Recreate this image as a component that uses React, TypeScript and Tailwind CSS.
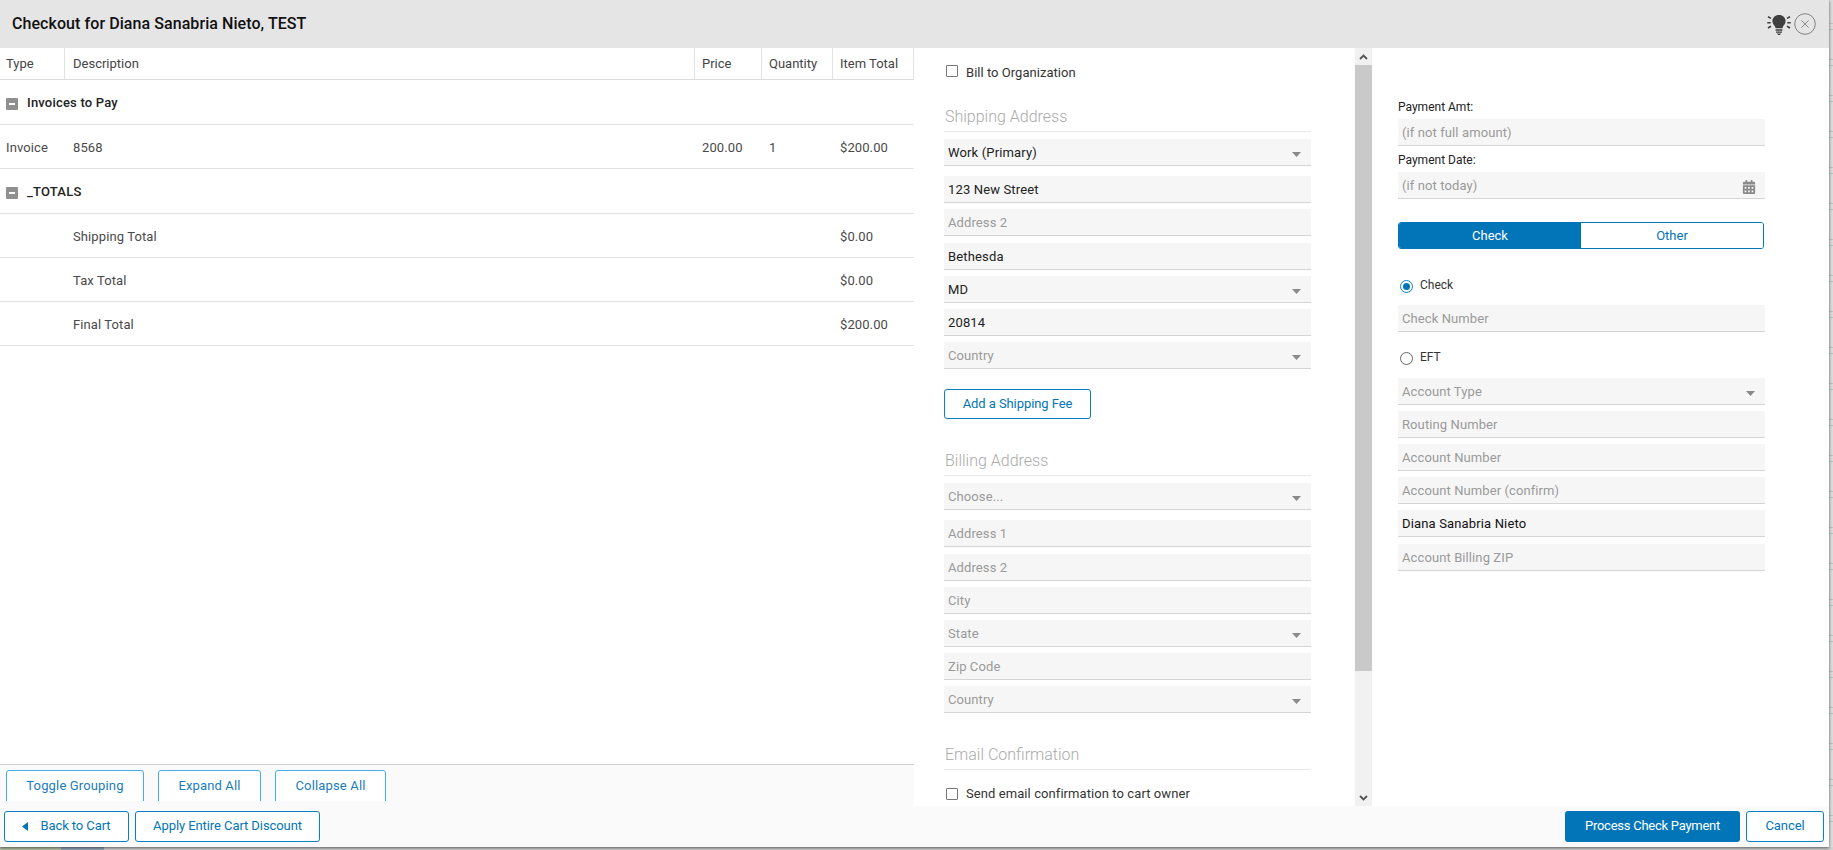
import React from "react";
import { FaCalendarAlt } from "react-icons/fa";

const F = "font-['Roboto',sans-serif]";

function Caret() {
  return (
    <svg width="9" height="5" viewBox="0 0 9 5" className="shrink-0 mt-[2px]">
      <path d="M0 0h9L4.500 5z" fill="#8a8a8a" />
    </svg>
  );
}

function Field({ text, filled, select, calendar, mt, dark }: { text: string; filled?: boolean; select?: boolean; calendar?: boolean; mt: string; dark?: boolean }) {
  return (
    <div className={`${mt} h-[27px] bg-[#f6f6f6] border-b border-[#d5d5d5] flex items-center justify-between pl-1 pr-[10px] pt-[2px] text-[13px] ${filled ? "tracking-[0.15px]" : "tracking-[0.1px]"} ${filled ? (dark ? "text-[#111]" : "text-[#222]") : "text-[#9a9a9a]"}`}>
      <span>{text}</span>
      {select && <Caret />}
      {calendar && <FaCalendarAlt className="text-[#8a8a8a] text-[14px] mr-[-1px] mt-[1px]" />}
    </div>
  );
}

function Heading({ text, mt }: { text: string; mt: string }) {
  return (
    <div className={`${mt} h-[24px] border-b border-[#e8e8e8] text-[16px] leading-[18px] pl-px text-[#aaaaaa] font-light`}>{text}</div>
  );
}

function Check({ label, mt, box, track }: { label: string; mt: string; box: string; track: string }) {
  return (
    <div className={`${mt} flex items-center pl-[2px] h-[14px] text-[13px] text-[#333] ${track}`}>
      <span className={`w-[12px] h-[12px] border border-[#777] rounded-[1px] bg-white mr-2 shrink-0 ${box}`} />
      <span>{label}</span>
    </div>
  );
}

function OutlineBtn({ children, className }: { children: React.ReactNode; className: string }) {
  return (
    <button className={`bg-white border border-[#0a7fc4] rounded-[3px] text-[13px] tracking-[-0.08px] text-[#0275b8] flex items-center justify-center ${className}`}>
      {children}
    </button>
  );
}

function ToolBtn({ text, className }: { text: string; className: string }) {
  return (
    <button className={`h-[34px] bg-white border border-[#45ade8] rounded-[3px] text-[13px] text-[#1a7dbb] tracking-[0.15px] flex items-center justify-center pb-[2px] ${className}`}>
      {text}
    </button>
  );
}

function GroupRow({ text, iconMt }: { text: string; iconMt: string }) {
  return (
    <div className="h-[45px] border-b border-[#e2e2e2] flex items-center pl-[6px] pt-[2px] text-[13px] font-medium text-[#222] tracking-[0.2px]">
      <span className={`w-[12px] h-[12px] bg-[#8f8f8f] rounded-[1px] flex items-center justify-center mr-[9px] ${iconMt}`}>
        <span className="w-[6px] h-[2px] bg-white" />
      </span>
      {text}
    </div>
  );
}

function DataRow({ a, b, c, d, e }: { a?: string; b: string; c?: string; d?: string; e: string }) {
  return (
    <div className="h-[44px] border-b border-[#e2e2e2] flex items-center pt-[2px] text-[13px] text-[#4a4a4a] tracking-[0.1px]">
      <span className="w-[65px] pl-[6px]">{a}</span>
      <span className="w-[630px] pl-2">{b}</span>
      <span className="w-[67px] pl-[7px]">{c}</span>
      <span className="w-[71px] pl-[7px]">{d}</span>
      <span className="w-[81px] pl-[7px]">{e}</span>
    </div>
  );
}

function HeadCell({ text, className }: { text: string; className: string }) {
  return <div className={`h-full flex items-center border-r border-[#e2e2e2] ${className}`}>{text}</div>;
}

function Bulb() {
  return (
    <svg width="24" height="20" viewBox="0 0 24 20" className="shrink-0 mt-[2px]">
      <path d="M12 0C8.200 0 5.400 2.700 5.400 6c0 2.400 1.400 3.700 2.300 5 .5.700.7 1.400.8 2.200h7c.1-.8.3-1.500.8-2.200.9-1.300 2.300-2.600 2.300-5 0-3.300-2.800-6-6.600-6z" fill="#3f3f3f" />
      <path d="M8.600 14.200h6.800v1.500H8.600zM9 16.400h6v1.400H9zM10 18.400h4L13 20h-2z" fill="#3f3f3f" />
      <path d="M.3 7.800h3.400M20.300 7.800h3.400M1 1.800l3 1.600M23 1.800l-3 1.600M1 13l3-1.800M23 13l-3-1.800" stroke="#3f3f3f" strokeWidth="1.600" fill="none" />
    </svg>
  );
}

function Close() {
  return (
    <svg width="22" height="22" viewBox="0 0 22 22" className="shrink-0">
      <circle cx="11" cy="11" r="10.300" fill="none" stroke="#777" strokeWidth="0.900" />
      <path d="M7.400 7.400l7.200 7.200M14.600 7.400l-7.200 7.200" stroke="#8a8a8a" strokeWidth="1" fill="none" />
    </svg>
  );
}

function Radio({ on }: { on?: boolean }) {
  return (
    <span className={`w-[13px] h-[13px] rounded-full border bg-white flex items-center justify-center shrink-0 ${on ? "border-[#0a84d0]" : "border-[#666]"}`}>
      {on && <span className="w-[7px] h-[7px] rounded-full bg-[#0275b8]" />}
    </span>
  );
}

export default function App() {
  return (
    <div className={`${F} w-[1833px] h-[850px] overflow-hidden bg-[#d2d2d2] flex flex-col`}>
      <div className="h-[847px] shrink-0 flex">
        <div className="w-[1829px] shrink-0 h-full bg-white shadow-[0_1px_3px_rgba(0,0,0,0.6)] relative flex flex-col">
          <div className="h-[48px] shrink-0 bg-[#e5e5e5] flex items-center pl-3 pr-[13px] justify-between">
            <span className="text-[16px] font-medium text-[#111] tracking-[0.07px]">Checkout for Diana Sanabria Nieto, TEST</span>
            <div className="flex items-center gap-[3px]">
              <Bulb />
              <Close />
            </div>
          </div>

          <div className="h-[758px] shrink-0 flex">
            {/* left */}
            <div className="w-[914px] shrink-0 flex flex-col">
              <div className="flex-1">
                <div className="h-[32px] border-b border-[#dcdcdc] flex items-center text-[13px] text-[#444]">
                  <HeadCell text="Type" className="w-[65px] pl-[6px]" />
                  <HeadCell text="Description" className="w-[630px] pl-2" />
                  <HeadCell text="Price" className="w-[67px] pl-[7px]" />
                  <HeadCell text="Quantity" className="w-[71px] pl-[7px]" />
                  <HeadCell text="Item Total" className="w-[81px] pl-[7px]" />
                </div>
                <GroupRow text="Invoices to Pay" iconMt="mt-[2px]" />
                <DataRow a="Invoice" b="8568" c="200.00" d="1" e="$200.00" />
                <GroupRow text="_TOTALS" iconMt="mt-[1px]" />
                <DataRow b="Shipping Total" e="$0.00" />
                <DataRow b="Tax Total" e="$0.00" />
                <DataRow b="Final Total" e="$200.00" />
              </div>
              <div className="h-[42px] shrink-0 bg-[#fafafa] border-t border-[#cfcfcf] pt-[5px]">
                <div className="h-[31px] overflow-hidden flex pl-[6px]">
                  <ToolBtn text="Toggle Grouping" className="w-[138px]" />
                  <ToolBtn text="Expand All" className="w-[103px] ml-[14px]" />
                  <ToolBtn text="Collapse All" className="w-[111px] ml-[14px]" />
                </div>
              </div>
            </div>

            {/* middle */}
            <div className="w-[458px] shrink-0 flex">
              <div className="w-[441px] h-full overflow-hidden pl-[30px] pr-[44px] pt-[18px]">
                <Check label="Bill to Organization" mt="mt-0" box="mb-[4px]" track="tracking-[0.03px]" />
                <Heading text="Shipping Address" mt="mt-[28px]" />
                <Field text="Work (Primary)" filled select mt="mt-[7px]" />
                <Field text="123 New Street" filled mt="mt-[10px]" />
                <Field text="Address 2" mt="mt-[6px]" />
                <Field text="Bethesda" filled mt="mt-[7px]" />
                <Field text="MD" filled select mt="mt-[6px]" />
                <Field text="20814" filled mt="mt-[6px]" />
                <Field text="Country" select mt="mt-[6px]" />
                <OutlineBtn className="w-[147px] mt-[20px] h-[30px]">Add a Shipping Fee</OutlineBtn>
                <Heading text="Billing Address" mt="mt-[33px]" />
                <Field text="Choose..." select mt="mt-[7px]" />
                <Field text="Address 1" mt="mt-[10px]" />
                <Field text="Address 2" mt="mt-[7px]" />
                <Field text="City" mt="mt-[6px]" />
                <Field text="State" select mt="mt-[6px]" />
                <Field text="Zip Code" mt="mt-[6px]" />
                <Field text="Country" select mt="mt-[6px]" />
                <Heading text="Email Confirmation" mt="mt-[33px]" />
                <Check label="Send email confirmation to cart owner" mt="mt-[17px]" box="" track="tracking-[0.08px]" />
              </div>
              <div className="w-[17px] shrink-0 bg-[#f1f1f1] flex flex-col">
                <div className="h-[17px] flex items-center justify-center">
                  <svg width="9" height="6" viewBox="0 0 9 6"><path d="M1 5l3.500-3.500L8 5" stroke="#555" strokeWidth="1.800" fill="none" /></svg>
                </div>
                <div className="h-[606px] bg-[#c9c9c9]" />
                <div className="flex-1" />
                <div className="h-[17px] flex items-center justify-center">
                  <svg width="9" height="6" viewBox="0 0 9 6"><path d="M1 1l3.500 3.500L8 1" stroke="#555" strokeWidth="1.800" fill="none" /></svg>
                </div>
              </div>
            </div>

            {/* right */}
            <div className="flex-1 pl-[26px] pr-[64px] pt-[51px]">
              <div className="h-[16px] text-[12px] leading-[16px] text-[#222]">Payment Amt:</div>
              <Field text="(if not full amount)" mt="mt-[4px]" />
              <div className="mt-[6px] h-[16px] text-[12px] leading-[16px] text-[#222]">Payment Date:</div>
              <Field text="(if not today)" calendar mt="mt-[4px]" />
              <div className="mt-[23px] w-[366px] h-[27px] flex rounded-[3px] overflow-hidden border border-[#0275b8] text-[13px]">
                <div className="w-[182px] bg-[#0275b8] text-white flex items-center justify-center">Check</div>
                <div className="flex-1 bg-white text-[#0275b8] flex items-center justify-center">Other</div>
              </div>
              <div className="mt-[30px] h-[14px] flex items-center pl-[2px] text-[12px] text-[#333]">
                <Radio on />
                <span className="ml-[7px] -mt-[2px]">Check</span>
              </div>
              <Field text="Check Number" mt="mt-[12px]" />
              <div className="mt-[19px] h-[14px] flex items-center pl-[2px] text-[12px] text-[#333]">
                <Radio />
                <span className="ml-[7px] -mt-[2px]">EFT</span>
              </div>
              <Field text="Account Type" select mt="mt-[13px]" />
              <Field text="Routing Number" mt="mt-[6px]" />
              <Field text="Account Number" mt="mt-[6px]" />
              <Field text="Account Number (confirm)" mt="mt-[6px]" />
              <Field text="Diana Sanabria Nieto" filled dark mt="mt-[6px]" />
              <Field text="Account Billing ZIP" mt="mt-[7px]" />
            </div>
          </div>

          <div className="h-[41px] shrink-0 bg-[#fafafa] flex items-center justify-between pl-1 pr-[5px] pb-[1px]">
            <div className="flex gap-[6px]">
              <OutlineBtn className="w-[125px] h-[31px]">
                <svg width="6" height="9" viewBox="0 0 6 9" className="mr-[12px]"><path d="M6 0v9L0 4.500z" fill="#0275b8" /></svg>
                Back to Cart
              </OutlineBtn>
              <OutlineBtn className="w-[185px] h-[31px]">Apply Entire Cart Discount</OutlineBtn>
            </div>
            <div className="flex gap-[6px]">
              <button className="w-[175px] h-[31px] bg-[#0275b8] rounded-[3px] text-[13px] text-white tracking-[-0.25px]">Process Check Payment</button>
              <OutlineBtn className="w-[78px] h-[31px]">Cancel</OutlineBtn>
            </div>
          </div>
        </div>
        <div className="w-[4px] shrink-0 h-full bg-[repeating-linear-gradient(180deg,#dcdcdc_0,#dcdcdc_23px,#b4c6c6_23px,#b4c6c6_24px,#dcdcdc_24px,#dcdcdc_29px,#b4c6c6_29px,#b4c6c6_30px,#dcdcdc_30px,#dcdcdc_36px)]" />
      </div>
      <div className="h-[3px] shrink-0 flex">
        <div className="w-[61px] bg-[#b7c4aa]" />
        <div className="w-[43px] bg-[#94a6b8]" />
        <div className="flex-1 bg-[#d2d2d2]" />
      </div>
    </div>
  );
}
